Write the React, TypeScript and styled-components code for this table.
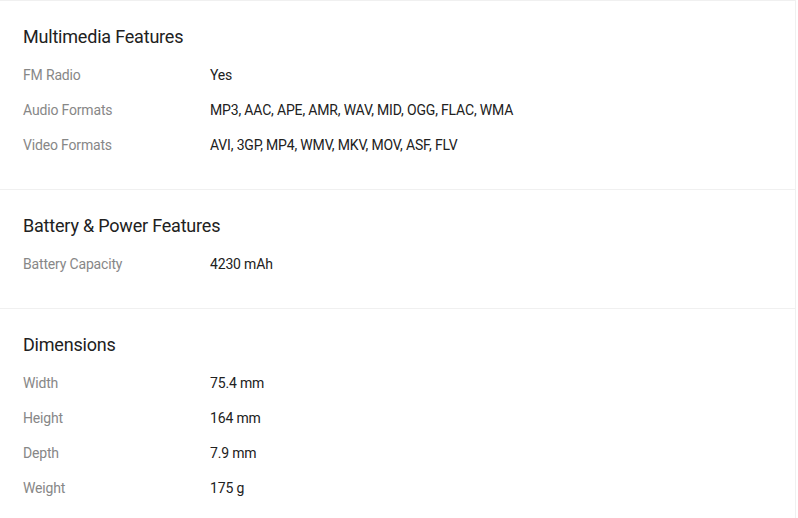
import React from "react";
import styled, { createGlobalStyle } from "styled-components";

const GlobalStyle = createGlobalStyle`
  html, body {
    margin: 0;
    padding: 0;
    background: #ffffff;
  }
  body {
    font-family: Roboto, "Liberation Sans", Arial, sans-serif;
    -webkit-font-smoothing: antialiased;
  }
`;

const Card = styled.div`
  width: 796px;
  box-sizing: border-box;
  background: #ffffff;
  border-top: 1px solid #f0f0f0;
  border-right: 1px solid #f0f0f0;
`;

const Section = styled.section`
  padding: 23px 23px 34px;
  border-bottom: 1px solid #f0f0f0;
`;

const Heading = styled.h2`
  margin: 0 0 15px;
  font-size: 18px;
  line-height: 26px;
  font-weight: 400;
  letter-spacing: -0.2px;
  color: #212121;
`;

const Rows = styled.ul`
  list-style: none;
  margin: 0;
  padding: 0;
  display: flex;
  flex-direction: column;
  gap: 15px;
`;

const Row = styled.li`
  display: grid;
  grid-template-columns: 187px 1fr;
  font-size: 14px;
  line-height: 20px;
  letter-spacing: -0.17px;
`;

const Label = styled.span`
  color: #878787;
`;

const Value = styled.span`
  color: #212121;
`;

type Spec = { label: string; value: string };
type Group = { title: string; specs: Spec[] };

const groups: Group[] = [
  {
    title: "Multimedia Features",
    specs: [
      { label: "FM Radio", value: "Yes" },
      { label: "Audio Formats", value: "MP3, AAC, APE, AMR, WAV, MID, OGG, FLAC, WMA" },
      { label: "Video Formats", value: "AVI, 3GP, MP4, WMV, MKV, MOV, ASF, FLV" },
    ],
  },
  {
    title: "Battery & Power Features",
    specs: [{ label: "Battery Capacity", value: "4230 mAh" }],
  },
  {
    title: "Dimensions",
    specs: [
      { label: "Width", value: "75.4 mm" },
      { label: "Height", value: "164 mm" },
      { label: "Depth", value: "7.9 mm" },
      { label: "Weight", value: "175 g" },
    ],
  },
];

export default function App() {
  return (
    <>
      <GlobalStyle />
      <Card>
        {groups.map((g) => (
          <Section key={g.title}>
            <Heading>{g.title}</Heading>
            <Rows>
              {g.specs.map((s) => (
                <Row key={s.label}>
                  <Label>{s.label}</Label>
                  <Value>{s.value}</Value>
                </Row>
              ))}
            </Rows>
          </Section>
        ))}
      </Card>
    </>
  );
}
